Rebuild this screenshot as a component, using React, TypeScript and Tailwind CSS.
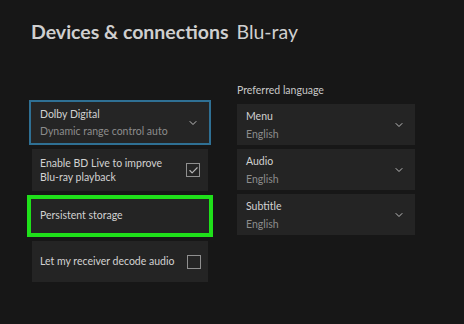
import { ChevronDown, Check } from "lucide-react";

const font = { fontFamily: 'Lato, "Open Sans", sans-serif' };

function Chevron() {
  return <ChevronDown className="w-[12px] h-[12px] text-[#bdbdbd]" strokeWidth={2} />;
}

function Box({ checked }: { checked?: boolean }) {
  return (
    <div className="w-[14px] h-[14px] border-[1.5px] border-[#8f8f8f] flex items-center justify-center">
      {checked && <Check className="w-[11px] h-[11px] text-[#b5b5b5]" strokeWidth={2.5} />}
    </div>
  );
}

function LangCard({ label, value }: { label: string; value: string }) {
  return (
    <div className="h-[41px] bg-[#242424] flex items-center justify-between pl-[9px] pr-[10px]">
      <div className="flex flex-col leading-[18px]">
        <span className="text-[10.5px] text-[#d2d2d2]">{label}</span>
        <span className="text-[10.5px] text-[#8c8c8c]">{value}</span>
      </div>
      <Chevron />
    </div>
  );
}

export default function App() {
  return (
    <div className="w-[464px] h-[324px] bg-[#171717] overflow-hidden" style={font}>
      <div className="pl-[31px] pt-[19px] h-[83px] flex items-start gap-[8px] leading-[26px]">
        <span className="text-[19.5px] font-bold text-[#cfcfcf]">Devices &amp; connections</span>
        <span className="text-[19.5px] text-[#cfcfcf]">Blu-ray</span>
      </div>
      <div className="flex pl-[29px] gap-[26px]">
        <div className="w-[182px] flex flex-col gap-[4px] pt-[17px]">
          <div className="h-[45px] border-2 border-[#2f7094] bg-[#252525] flex items-center justify-between pl-[9px] pr-[10px]">
            <div className="flex flex-col leading-[17px]">
              <span className="text-[10.5px] text-[#d2d2d2]">Dolby Digital</span>
              <span className="text-[10.5px] text-[#8c8c8c]">Dynamic range control auto</span>
            </div>
            <Chevron />
          </div>
          <div className="mx-[3px] h-[42px] bg-[#242424] flex items-center justify-between pl-[8px] pr-[8px]">
            <div className="flex flex-col leading-[14px]">
              <span className="text-[10.5px] text-[#d2d2d2]">Enable BD Live to improve</span>
              <span className="text-[10.5px] text-[#d2d2d2]">Blu-ray playback</span>
            </div>
            <Box checked />
          </div>
          <div className="-mx-[2px] h-[42px] border-[4px] border-[#1fe01a] bg-[#242424] flex items-center pl-[9px]">
            <span className="text-[10.5px] text-[#d2d2d2]">Persistent storage</span>
          </div>
          <div className="mx-[3px] h-[41px] bg-[#242424] flex items-center justify-between pl-[8px] pr-[7px]">
            <span className="text-[10.5px] text-[#d2d2d2]">Let my receiver decode audio</span>
            <Box />
          </div>
        </div>
        <div className="w-[178px] flex flex-col">
          <div className="h-[14px] leading-[14px] text-[10.5px] text-[#c8c8c8] mb-[7px]">Preferred language</div>
          <div className="flex flex-col gap-[4px]">
            <LangCard label="Menu" value="English" />
            <LangCard label="Audio" value="English" />
            <LangCard label="Subtitle" value="English" />
          </div>
        </div>
      </div>
    </div>
  );
}
